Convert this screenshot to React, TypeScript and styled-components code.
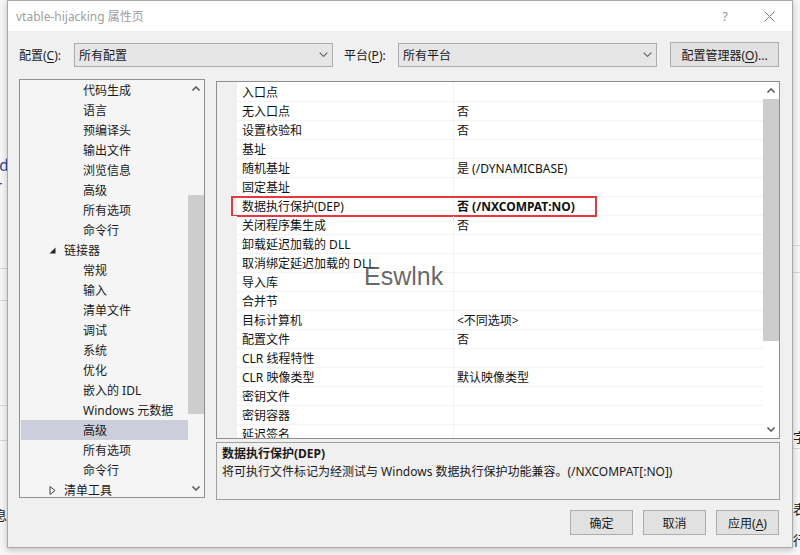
import React from "react";
import styled, { createGlobalStyle, css } from "styled-components";

const GlobalStyle = createGlobalStyle`
  html, body { margin: 0; padding: 0; }
  body {
    width: 800px;
    height: 555px;
    overflow: hidden;
    background: #f6f6f6;
    font-family: "Noto Sans", "Noto Sans CJK SC", sans-serif;
    font-size: 12px;
    color: #1a1a1a;
  }
  * { box-sizing: border-box; }
`;

const Desktop = styled.div`
  position: relative;
  width: 800px;
  height: 555px;
  background: #f6f6f6;
  padding: 0 8px 7px 7px;
  display: flex;
  overflow: hidden;
`;

const Fragment = styled.span<{ $x: number; $y: number; $color?: string; $size?: number }>`
  position: absolute;
  left: ${(p) => p.$x}px;
  top: ${(p) => p.$y}px;
  color: ${(p) => p.$color || "#222"};
  font-size: ${(p) => p.$size || 13}px;
  line-height: 1;
  font-family: "Noto Sans CJK SC", "DejaVu Serif", serif;
`;

const FragLine = styled.div<{ $x: number; $y: number; $w: number }>`
  position: absolute;
  left: ${(p) => p.$x}px;
  top: ${(p) => p.$y}px;
  width: ${(p) => p.$w}px;
  height: 1px;
  background: #d6d6d6;
`;

const Dialog = styled.div`
  position: relative;
  z-index: 1;
  flex: 1;
  display: flex;
  flex-direction: column;
  background: #f0f0f0;
  border: 1px solid #a8a8a8;
  box-shadow: 0 2px 6px rgba(0, 0, 0, 0.22);
`;

const TitleBar = styled.div`
  height: 30px;
  background: #ffffff;
  display: flex;
  align-items: center;
  padding-left: 8px;
  padding-right: 15px;
  color: #a0a0a0;
  font-size: 12px;
`;

const TitleText = styled.span`
  flex: 1;
`;

const TitleButton = styled.span<{ $mr?: number }>`
  width: 16px;
  margin-right: ${(p) => p.$mr || 0}px;
  display: flex;
  justify-content: center;
  align-items: center;
  color: #999999;
  font-size: 13px;
`;

const Body = styled.div`
  flex: 1;
  display: flex;
  flex-direction: column;
  padding: 11px 12px 0 11px;
`;

const ToolbarRow = styled.div`
  display: flex;
  align-items: center;
  height: 25px;
`;

const Label = styled.span<{ $w: number }>`
  width: ${(p) => p.$w}px;
  flex-shrink: 0;
`;

const U = styled.span`
  text-decoration: underline;
  text-underline-offset: 2px;
`;

const Select = styled.div<{ $mr: number }>`
  width: 259px;
  height: 24px;
  margin-right: ${(p) => p.$mr}px;
  flex-shrink: 0;
  display: flex;
  align-items: center;
  padding: 0 4px 0 4px;
  background: #e6e6e6;
  border: 1px solid #acacac;
`;

const SelectText = styled.span`
  flex: 1;
`;

const Button = styled.button<{ $w: number }>`
  width: ${(p) => p.$w}px;
  height: 25px;
  flex-shrink: 0;
  padding: 0;
  font-family: inherit;
  font-size: 12px;
  color: #1a1a1a;
  background: #e1e1e1;
  border: 1px solid #adadad;
`;

const Main = styled.div`
  display: flex;
  gap: 11px;
  margin-top: 12px;
  height: 421px;
`;

const Tree = styled.div`
  width: 186px;
  height: 419px;
  flex-shrink: 0;
  display: flex;
  border: 1px solid #8f8f8f;
  background: #f5f5f5;
`;

const TreeList = styled.div`
  flex: 1;
  overflow: hidden;
  padding-left: 1px;
`;

const TreeRow = styled.div<{ $level: number; $selected?: boolean }>`
  height: 20px;
  position: relative;
  display: flex;
  align-items: center;
  padding-left: ${(p) => (p.$level === 1 ? 43 : 62)}px;
  white-space: nowrap;
  ${(p) =>
    p.$selected &&
    css`
      background: #cccedb;
    `}
`;

const Twisty = styled.span`
  position: absolute;
  left: 28px;
  top: 7px;
  width: 7px;
  height: 7px;
  display: flex;
`;

const ScrollBar = styled.div`
  width: 16px;
  flex-shrink: 0;
  display: flex;
  flex-direction: column;
`;

const ScrollArrow = styled.div`
  height: 17px;
  display: flex;
  align-items: center;
  justify-content: center;
`;

const ScrollTrack = styled.div`
  flex: 1;
`;

const Thumb = styled.div<{ $top: number; $h: number }>`
  margin-top: ${(p) => p.$top}px;
  height: ${(p) => p.$h}px;
  background: #cdcdcd;
`;

const RightCol = styled.div`
  width: 564px;
  display: flex;
  flex-direction: column;
  gap: 3px;
  padding-top: 2px;
`;

const Grid = styled.div`
  position: relative;
  height: 358px;
  display: flex;
  border: 1px solid #8f8f8f;
  background: #ffffff;
`;

const GridList = styled.div`
  flex: 1;
  overflow: hidden;
  padding-top: 1px;
  background: linear-gradient(to right, #f0f0f0 0, #f0f0f0 20px, #ffffff 20px);
`;

const GridRow = styled.div`
  position: relative;
  height: 19px;
  display: grid;
  grid-template-columns: 20px 216px 1fr;
`;

const Gutter = styled.div`
  background: #f0f0f0;
`;

const Cell = styled.div<{ $value?: boolean; $bold?: boolean }>`
  display: flex;
  align-items: center;
  padding-left: ${(p) => (p.$value ? 3 : 5)}px;
  border-bottom: 1px solid #f3f3f3;
  border-left: ${(p) => (p.$value ? "1px solid #f3f3f3" : "none")};
  white-space: nowrap;
  overflow: hidden;
  font-weight: ${(p) => (p.$bold ? 700 : 400)};
  color: #111;
`;

const Highlight = styled.div`
  position: absolute;
  left: 14px;
  top: -1px;
  width: 366px;
  height: 21px;
  border: 2px solid #e5393f;
  pointer-events: none;
`;

const Watermark = styled.div`
  position: absolute;
  left: 147px;
  top: 180px;
  font-family: "Liberation Sans", Arial, sans-serif;
  font-size: 25px;
  color: rgba(70, 70, 70, 0.82);
  pointer-events: none;
`;

const Description = styled.div`
  height: 59px;
  border: 1px solid #a0a0a0;
  background: #f0f0f0;
  padding: 2px 5px;
  line-height: 18px;
`;

const DescTitle = styled.div`
  font-weight: 700;
`;

const Footer = styled.div`
  display: flex;
  justify-content: flex-end;
  gap: 10px;
  padding-top: 10px;
  padding-right: 1px;
`;

const Chevron = ({ dir, w = 8, color = "#606060", sw = 1.4 }: { dir: "up" | "down"; w?: number; color?: string; sw?: number }) => (
  <svg width={w} height={w / 2 + 1} viewBox="0 0 8 5">
    {dir === "down" ? (
      <polyline points="0.5,0.5 4,4 7.5,0.5" fill="none" stroke={color} strokeWidth={sw} />
    ) : (
      <polyline points="0.5,4.5 4,1 7.5,4.5" fill="none" stroke={color} strokeWidth={sw} />
    )}
  </svg>
);

type TreeItem = { text: string; level: 1 | 2; expanded?: boolean; selected?: boolean };

const treeItems: TreeItem[] = [
  { text: "代码生成", level: 2 },
  { text: "语言", level: 2 },
  { text: "预编译头", level: 2 },
  { text: "输出文件", level: 2 },
  { text: "浏览信息", level: 2 },
  { text: "高级", level: 2 },
  { text: "所有选项", level: 2 },
  { text: "命令行", level: 2 },
  { text: "链接器", level: 1, expanded: true },
  { text: "常规", level: 2 },
  { text: "输入", level: 2 },
  { text: "清单文件", level: 2 },
  { text: "调试", level: 2 },
  { text: "系统", level: 2 },
  { text: "优化", level: 2 },
  { text: "嵌入的 IDL", level: 2 },
  { text: "Windows 元数据", level: 2 },
  { text: "高级", level: 2, selected: true },
  { text: "所有选项", level: 2 },
  { text: "命令行", level: 2 },
  { text: "清单工具", level: 1, expanded: false },
];

type GridItem = { name: string; value?: string; bold?: boolean; highlight?: boolean };

const gridItems: GridItem[] = [
  { name: "入口点" },
  { name: "无入口点", value: "否" },
  { name: "设置校验和", value: "否" },
  { name: "基址" },
  { name: "随机基址", value: "是 (/DYNAMICBASE)" },
  { name: "固定基址" },
  { name: "数据执行保护(DEP)", value: "否 (/NXCOMPAT:NO)", bold: true, highlight: true },
  { name: "关闭程序集生成", value: "否" },
  { name: "卸载延迟加载的 DLL" },
  { name: "取消绑定延迟加载的 DLL" },
  { name: "导入库" },
  { name: "合并节" },
  { name: "目标计算机", value: "<不同选项>" },
  { name: "配置文件", value: "否" },
  { name: "CLR 线程特性" },
  { name: "CLR 映像类型", value: "默认映像类型" },
  { name: "密钥文件" },
  { name: "密钥容器" },
  { name: "延迟签名" },
];

export default function App() {
  return (
    <>
      <GlobalStyle />
      <Desktop>
        <Fragment $x={-4} $y={44} $color="#c0392b">(</Fragment>
        <Fragment $x={-5} $y={157} $color="#2b4a8c" $size={15}>ld</Fragment>
        <Fragment $x={-4} $y={178} $color="#2b4a8c" $size={15}>r</Fragment>
        <FragLine $x={0} $y={268} $w={7} />
        <FragLine $x={0} $y={300} $w={7} />
        <FragLine $x={0} $y={405} $w={7} />
        <FragLine $x={0} $y={440} $w={7} />
        <Fragment $x={-6} $y={508}>息</Fragment>
        <FragLine $x={792} $y={245} $w={8} />
        <FragLine $x={792} $y={272} $w={8} />
        <Fragment $x={793} $y={430}>字</Fragment>
        <FragLine $x={792} $y={448} $w={8} />
        <Fragment $x={793} $y={502}>表</Fragment>
        <Fragment $x={793} $y={533}>行</Fragment>

        <Dialog>
          <TitleBar>
            <TitleText>vtable-hijacking 属性页</TitleText>
            <TitleButton $mr={28}>?</TitleButton>
            <TitleButton>
              <svg width="11" height="11" viewBox="0 0 11 11">
                <path d="M0.5 0.5 L10.5 10.5 M10.5 0.5 L0.5 10.5" stroke="#7a7a7a" strokeWidth="1" />
              </svg>
            </TitleButton>
          </TitleBar>

          <Body>
            <ToolbarRow>
              <Label $w={55}>
                配置(<U>C</U>):
              </Label>
              <Select $mr={11}>
                <SelectText>所有配置</SelectText>
                <Chevron dir="down" w={9} sw={1} />
              </Select>
              <Label $w={54}>
                平台(<U>P</U>):
              </Label>
              <Select $mr={13}>
                <SelectText>所有平台</SelectText>
                <Chevron dir="down" w={9} sw={1} />
              </Select>
              <Button $w={109}>
                配置管理器(<U>O</U>)...
              </Button>
            </ToolbarRow>

            <Main>
              <Tree>
                <TreeList>
                  {treeItems.map((it, i) => (
                    <TreeRow key={i} $level={it.level} $selected={it.selected}>
                      {it.level === 1 && (
                        <Twisty>
                          {it.expanded ? (
                            <svg width="7" height="7" viewBox="0 0 7 7">
                              <polygon points="6.5,0.5 6.5,6.5 0.5,6.5" fill="#262626" />
                            </svg>
                          ) : (
                            <svg width="7" height="9" viewBox="0 0 7 9" style={{ marginTop: -1 }}>
                              <polygon points="1,0.5 6,4.5 1,8.5" fill="none" stroke="#404040" strokeWidth="1" />
                            </svg>
                          )}
                        </Twisty>
                      )}
                      {it.text}
                    </TreeRow>
                  ))}
                </TreeList>
                <ScrollBar>
                  <ScrollArrow>
                    <Chevron dir="up" w={8} sw={1.6} />
                  </ScrollArrow>
                  <ScrollTrack>
                    <Thumb $top={98} $h={219} />
                  </ScrollTrack>
                  <ScrollArrow>
                    <Chevron dir="down" w={8} sw={1.6} />
                  </ScrollArrow>
                </ScrollBar>
              </Tree>

              <RightCol>
                <Grid>
                  <GridList>
                    {gridItems.map((it, i) => (
                      <GridRow key={i}>
                        <Gutter />
                        <Cell>{it.name}</Cell>
                        <Cell $value $bold={it.bold}>
                          {it.value}
                        </Cell>
                        {it.highlight && <Highlight />}
                      </GridRow>
                    ))}
                  </GridList>
                  <ScrollBar>
                    <ScrollArrow>
                      <Chevron dir="up" w={8} sw={1.6} />
                    </ScrollArrow>
                    <ScrollTrack>
                      <Thumb $top={0} $h={242} />
                    </ScrollTrack>
                    <ScrollArrow>
                      <Chevron dir="down" w={8} sw={1.6} />
                    </ScrollArrow>
                  </ScrollBar>
                  <Watermark>Eswlnk</Watermark>
                </Grid>
                <Description>
                  <DescTitle>数据执行保护(DEP)</DescTitle>
                  <div>将可执行文件标记为经测试与 Windows 数据执行保护功能兼容。(/NXCOMPAT[:NO])</div>
                </Description>
              </RightCol>
            </Main>

            <Footer>
              <Button $w={63}>确定</Button>
              <Button $w={63}>取消</Button>
              <Button $w={63}>
                应用(<U>A</U>)
              </Button>
            </Footer>
          </Body>
        </Dialog>
      </Desktop>
    </>
  );
}
